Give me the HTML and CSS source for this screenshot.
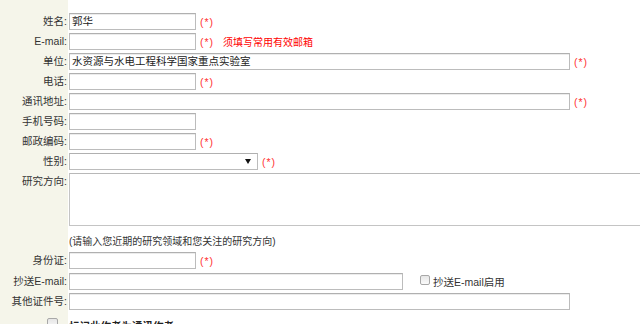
FILE: index.html
```html
<!DOCTYPE html>
<html lang="zh-CN">
<head>
<meta charset="utf-8">
<title>作者信息</title>
<link rel="stylesheet" href="styles.css">
</head>
<body>
<div class="page">
  <div class="row">
    <div class="lbl">姓名:</div>
    <div class="fld"><div class="inp w-s">郭华</div><span class="req">(*)</span></div>
  </div>
  <div class="row">
    <div class="lbl">E-mail:</div>
    <div class="fld"><div class="inp w-s"></div><span class="req">(*)</span><span class="warn">须填写常用有效邮箱</span></div>
  </div>
  <div class="row">
    <div class="lbl">单位:</div>
    <div class="fld"><div class="inp w-l">水资源与水电工程科学国家重点实验室</div><span class="req">(*)</span></div>
  </div>
  <div class="row">
    <div class="lbl">电话:</div>
    <div class="fld"><div class="inp w-s"></div><span class="req">(*)</span></div>
  </div>
  <div class="row">
    <div class="lbl">通讯地址:</div>
    <div class="fld"><div class="inp w-l"></div><span class="req">(*)</span></div>
  </div>
  <div class="row">
    <div class="lbl">手机号码:</div>
    <div class="fld"><div class="inp w-s"></div></div>
  </div>
  <div class="row">
    <div class="lbl">邮政编码:</div>
    <div class="fld"><div class="inp w-s"></div><span class="req">(*)</span></div>
  </div>
  <div class="row">
    <div class="lbl">性别:</div>
    <div class="fld"><div class="inp sel"><span class="arrow"></span></div><span class="req">(*)</span></div>
  </div>
  <div class="row row-ta">
    <div class="lbl">研究方向:</div>
    <div class="fld"><div class="ta"></div></div>
  </div>
  <div class="row">
    <div class="lbl"></div>
    <div class="fld"><span class="hint">(请输入您近期的研究领域和您关注的研究方向)</span></div>
  </div>
  <div class="row row-id">
    <div class="lbl">身份证:</div>
    <div class="fld"><div class="inp w-s"></div><span class="req">(*)</span></div>
  </div>
  <div class="row">
    <div class="lbl">抄送E-mail:</div>
    <div class="fld"><div class="inp w-m"></div><span class="cb cb-cc"></span><span class="cbtext">抄送E-mail启用</span></div>
  </div>
  <div class="row row-oth">
    <div class="lbl">其他证件号:</div>
    <div class="fld"><div class="inp w-l"></div></div>
  </div>
  <div class="row">
    <div class="lbl lbl-cb"><span class="cb"></span></div>
    <div class="fld"><span class="bold">标记此作者为通讯作者</span></div>
  </div>
</div>
</body>
</html>
```

FILE: styles.css
```css
html, body {
  margin: 0;
  padding: 0;
  overflow: hidden;
  background: #fff;
}

.page {
  width: 640px;
  height: 324px;
  overflow: hidden;
  box-sizing: border-box;
  padding-top: 13px;
  background: linear-gradient(to right, #f5f5ea 0, #f5f5ea 68px, #fff 68px);
  font-family: "Liberation Sans", "Noto Sans CJK SC", sans-serif;
  font-size: 10.5px;
  color: #333;
}

.row {
  display: flex;
  align-items: center;
  height: 17px;
  margin-bottom: 3px;
}

.lbl {
  width: 68px;
  flex: none;
  box-sizing: border-box;
  padding-right: 1px;
  text-align: right;
  white-space: nowrap;
  line-height: 17px;
}

.fld {
  margin-left: 1px;
  display: flex;
  align-items: center;
  white-space: nowrap;
  height: 17px;
}

.inp {
  box-sizing: border-box;
  height: 17px;
  border: 1px solid #bcbcbc;
  border-top-color: #b0b0b0;
  background: #fff;
  box-shadow: inset 0 1px 0 #ececec;
  padding: 0 2px;
  line-height: 15px;
  color: #222;
  font-size: 10.5px;
  overflow: hidden;
}

.w-s { width: 127px; }
.w-m { width: 334px; }
.w-l { width: 501px; }

.sel {
  width: 189px;
  display: flex;
  justify-content: flex-end;
  align-items: center;
  padding-right: 6px;
  box-shadow: none;
}

.arrow {
  width: 0;
  height: 0;
  border-left: 3px solid transparent;
  border-right: 3px solid transparent;
  border-top: 5px solid #111;
}

.req {
  color: #f33;
  margin-left: 4px;
  font-size: 10.5px;
  letter-spacing: 1px;
}

.warn {
  color: #f00;
  margin-left: 9px;
  font-size: 10px;
}

.row-ta {
  align-items: flex-start;
  height: 53px;
  margin-bottom: 6px;
}

.row-ta .fld {
  height: 53px;
}

.ta {
  box-sizing: border-box;
  width: 620px;
  height: 53px;
  border: 1px solid #c4c4c4;
  border-top-color: #b8b8b8;
  background: #fff;
}

.hint {
  font-size: 10px;
  color: #333;
}

.row-id {
  margin-bottom: 4px;
}

.row-oth {
  margin-bottom: 4px;
}

.cb {
  display: inline-block;
  box-sizing: border-box;
  width: 10px;
  height: 10px;
  border: 1px solid #a8a8a8;
  border-radius: 2px;
  background: linear-gradient(#e6e6e6, #fafafa);
}

.cb-cc {
  margin-left: 17px;
  margin-top: -4px;
}

.cbtext {
  margin-left: 3px;
  color: #333;
}

.lbl-cb {
  display: flex;
  justify-content: flex-end;
  align-items: center;
  padding-right: 10px;
  height: 17px;
}

.lbl-cb .cb {
  width: 11px;
  height: 11px;
  margin-top: 2px;
}

.bold {
  font-weight: bold;
  color: #222;
  margin-top: 6px;
}
```
